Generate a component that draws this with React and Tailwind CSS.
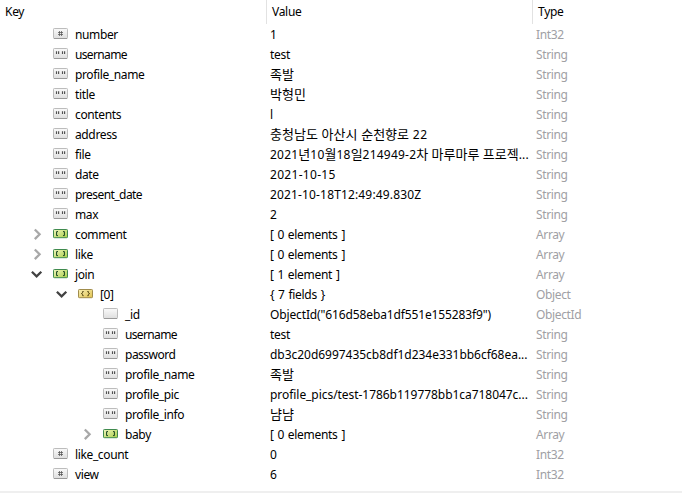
import React from 'react'

const rows = [
  { depth: 0, icon: 'number', name: 'number', value: '1', type: 'Int32' },
  { depth: 0, icon: 'string', name: 'username', value: 'test', type: 'String', nameSpacing: 'tracking-[-0.65px]' },
  { depth: 0, icon: 'string', name: 'profile_name', value: '족발', type: 'String' },
  { depth: 0, icon: 'string', name: 'title', value: '박형민', type: 'String' },
  { depth: 0, icon: 'string', name: 'contents', value: 'l', type: 'String' },
  { depth: 0, icon: 'string', name: 'address', value: '충청남도 아산시 순천향로 22', type: 'String', spacing: 'tracking-[0.6px]' },
  { depth: 0, icon: 'string', name: 'file', value: '2021년10월18일214949-2차 마루마루 프로젝...', type: 'String', spacing: 'tracking-[0.22px]' },
  { depth: 0, icon: 'string', name: 'date', value: '2021-10-15', type: 'String', spacing: 'tracking-[0.3px]' },
  { depth: 0, icon: 'string', name: 'present_date', value: '2021-10-18T12:49:49.830Z', type: 'String', spacing: 'tracking-[0.15px]', nameSpacing: 'tracking-[-0.55px]' },
  { depth: 0, icon: 'string', name: 'max', value: '2', type: 'String' },
  { depth: 0, icon: 'array', name: 'comment', value: '[ 0 elements ]', type: 'Array', arrow: 'right' },
  { depth: 0, icon: 'array', name: 'like', value: '[ 0 elements ]', type: 'Array', arrow: 'right' },
  { depth: 0, icon: 'array', name: 'join', value: '[ 1 element ]', type: 'Array', arrow: 'down' },
  { depth: 1, icon: 'object', name: '[0]', value: '{ 7 fields }', type: 'Object', arrow: 'down' },
  { depth: 2, icon: 'id', name: '_id', value: 'ObjectId("616d58eba1df551e155283f9")', type: 'ObjectId', spacing: 'tracking-[-0.13px]' },
  { depth: 2, icon: 'string', name: 'username', value: 'test', type: 'String', nameSpacing: 'tracking-[-0.65px]' },
  { depth: 2, icon: 'string', name: 'password', value: 'db3c20d6997435cb8df1d234e331bb6cf68ea...', type: 'String', spacing: 'tracking-[-0.03px]', nameSpacing: 'tracking-[-0.5px]' },
  { depth: 2, icon: 'string', name: 'profile_name', value: '족발', type: 'String' },
  { depth: 2, icon: 'string', name: 'profile_pic', value: 'profile_pics/test-1786b119778bb1ca718047c...', type: 'String', spacing: 'tracking-[-0.05px]' },
  { depth: 2, icon: 'string', name: 'profile_info', value: '냠냠', type: 'String' },
  { depth: 2, icon: 'array', name: 'baby', value: '[ 0 elements ]', type: 'Array', arrow: 'right' },
  { depth: 0, icon: 'number', name: 'like_count', value: '0', type: 'Int32' },
  { depth: 0, icon: 'number', name: 'view', value: '6', type: 'Int32' },
]

const indent = ['pl-[31px]', 'pl-[56px]', 'pl-[81px]']

const Arrow = ({ dir }) => (
  <svg className="w-3 h-5 shrink-0" viewBox="0 0 12 20" fill="none" strokeWidth="2.3">
    { dir === 'right' && <path d="M3.8 5.5 L8.6 10.3 L3.8 15.1" stroke="#a8a8a8" /> }
    { dir === 'down' && <path d="M0.9 7.7 L5.6 12.3 L10.3 7.7" stroke="#424242" /> }
  </svg>
)

const colors = {
  array: { fill: 'url(#green)', stroke: '#3f8a4e', ink: '#17421f' },
  object: { fill: 'url(#yellow)', stroke: '#a08c4c', ink: '#4f4211' },
}

const TypeIcon = ({ kind }) => {
  const c = colors[kind]
  return (
    <svg className="w-[15px] h-5 shrink-0" viewBox="0 0 15 20" fill="none">
      { c
        ? <rect x="0.5" y="5.5" width="14" height="8.2" rx="0.8" fill={c.fill} stroke={c.stroke} />
        : <>
            <rect x="0.5" y="4.5" width="14" height="10" rx="0.8" fill="url(#gray)" stroke="#bcbcbc" />
            <path d="M1 14.5h13" stroke="#999999" />
          </> }
      { kind === 'string' && <path d="M3.5 7.2v2.8M5.6 7.2v2.8M9.5 7.2v2.8M11.6 7.2v2.8" stroke="#505050" strokeWidth="1.15" /> }
      { kind === 'number' && <path d="M6.5 7v5M8.5 7v5M5 8.5h5M5 10.5h5" stroke="#555555" strokeWidth="0.75" /> }
      { kind === 'array' && <path d="M5 7.6H3.6v4H5M10 7.6h1.4v4H10" stroke={c.ink} /> }
      { kind === 'object' && <path d="M5.7 7.5H4.6v1.4L3.3 9.6l1.3.7v1.4h1.1M9.3 7.5h1.1v1.4l1.3.7-1.3.7v1.4H9.3" stroke={c.ink} strokeWidth="0.9" /> }
    </svg>
  )
}

const Gradients = () => (
  <svg className="absolute w-0 h-0">
    <defs>
      <linearGradient id="gray" x1="0" y1="0" x2="0" y2="1">
        <stop offset="0" stopColor="#fafafa" />
        <stop offset="1" stopColor="#dedede" />
      </linearGradient>
      <linearGradient id="green" x1="0" y1="0" x2="1" y2="1">
        <stop offset="0" stopColor="#f0f6bd" />
        <stop offset="1" stopColor="#a9cf48" />
      </linearGradient>
      <linearGradient id="yellow" x1="0" y1="0" x2="1" y2="1">
        <stop offset="0" stopColor="#f8efb4" />
        <stop offset="1" stopColor="#e0c250" />
      </linearGradient>
    </defs>
  </svg>
)

// hangul is set a bit larger than the latin text
const Value = ({ text }) => text.split(/([가-힣]+)/).map((part, i) => (
  i % 2 ? <span key={i} className="text-[13px] leading-none tracking-normal">{ part }</span> : part
))

const Row = ({ row }) => (
  <div className="flex h-5 leading-[22px]">
    <div className={`flex w-[270px] shrink-0 ${indent[row.depth]}`}>
      <Arrow dir={row.arrow} />
      <span className="w-[10px] shrink-0" />
      <TypeIcon kind={row.icon} />
      <span className={`ml-[7px] whitespace-pre ${row.nameSpacing || 'tracking-[-0.37px]'}`}>{ row.name }</span>
    </div>
    <div className={`w-[266px] shrink-0 whitespace-pre ${row.spacing || '[word-spacing:1px]'}`}><Value text={row.value} /></div>
    <div className="text-[#a0a0a4] tracking-[-0.37px]">{ row.type }</div>
  </div>
)

export default function App() {
  return (
    <div className="flex flex-col w-[682px] h-[493px] overflow-hidden bg-white text-black text-[12px] tracking-[-0.3px] font-['Noto_Sans','Noto_Sans_CJK_KR',sans-serif]">
      <Gradients />
      <div className="flex h-6 leading-6">
        <div className="w-[266px] pl-[5px]">Key</div>
        <div className="w-[266px] pl-[5px] border-l border-[#e2e2e2]">Value</div>
        <div className="grow pl-[5px] border-l border-[#e2e2e2]">Type</div>
      </div>
      <div className="grow">
        { rows.map((row, i) => <Row key={i} row={row} />) }
      </div>
      <div className="h-[2px] bg-[#efefef]" />
    </div>
  )
}
